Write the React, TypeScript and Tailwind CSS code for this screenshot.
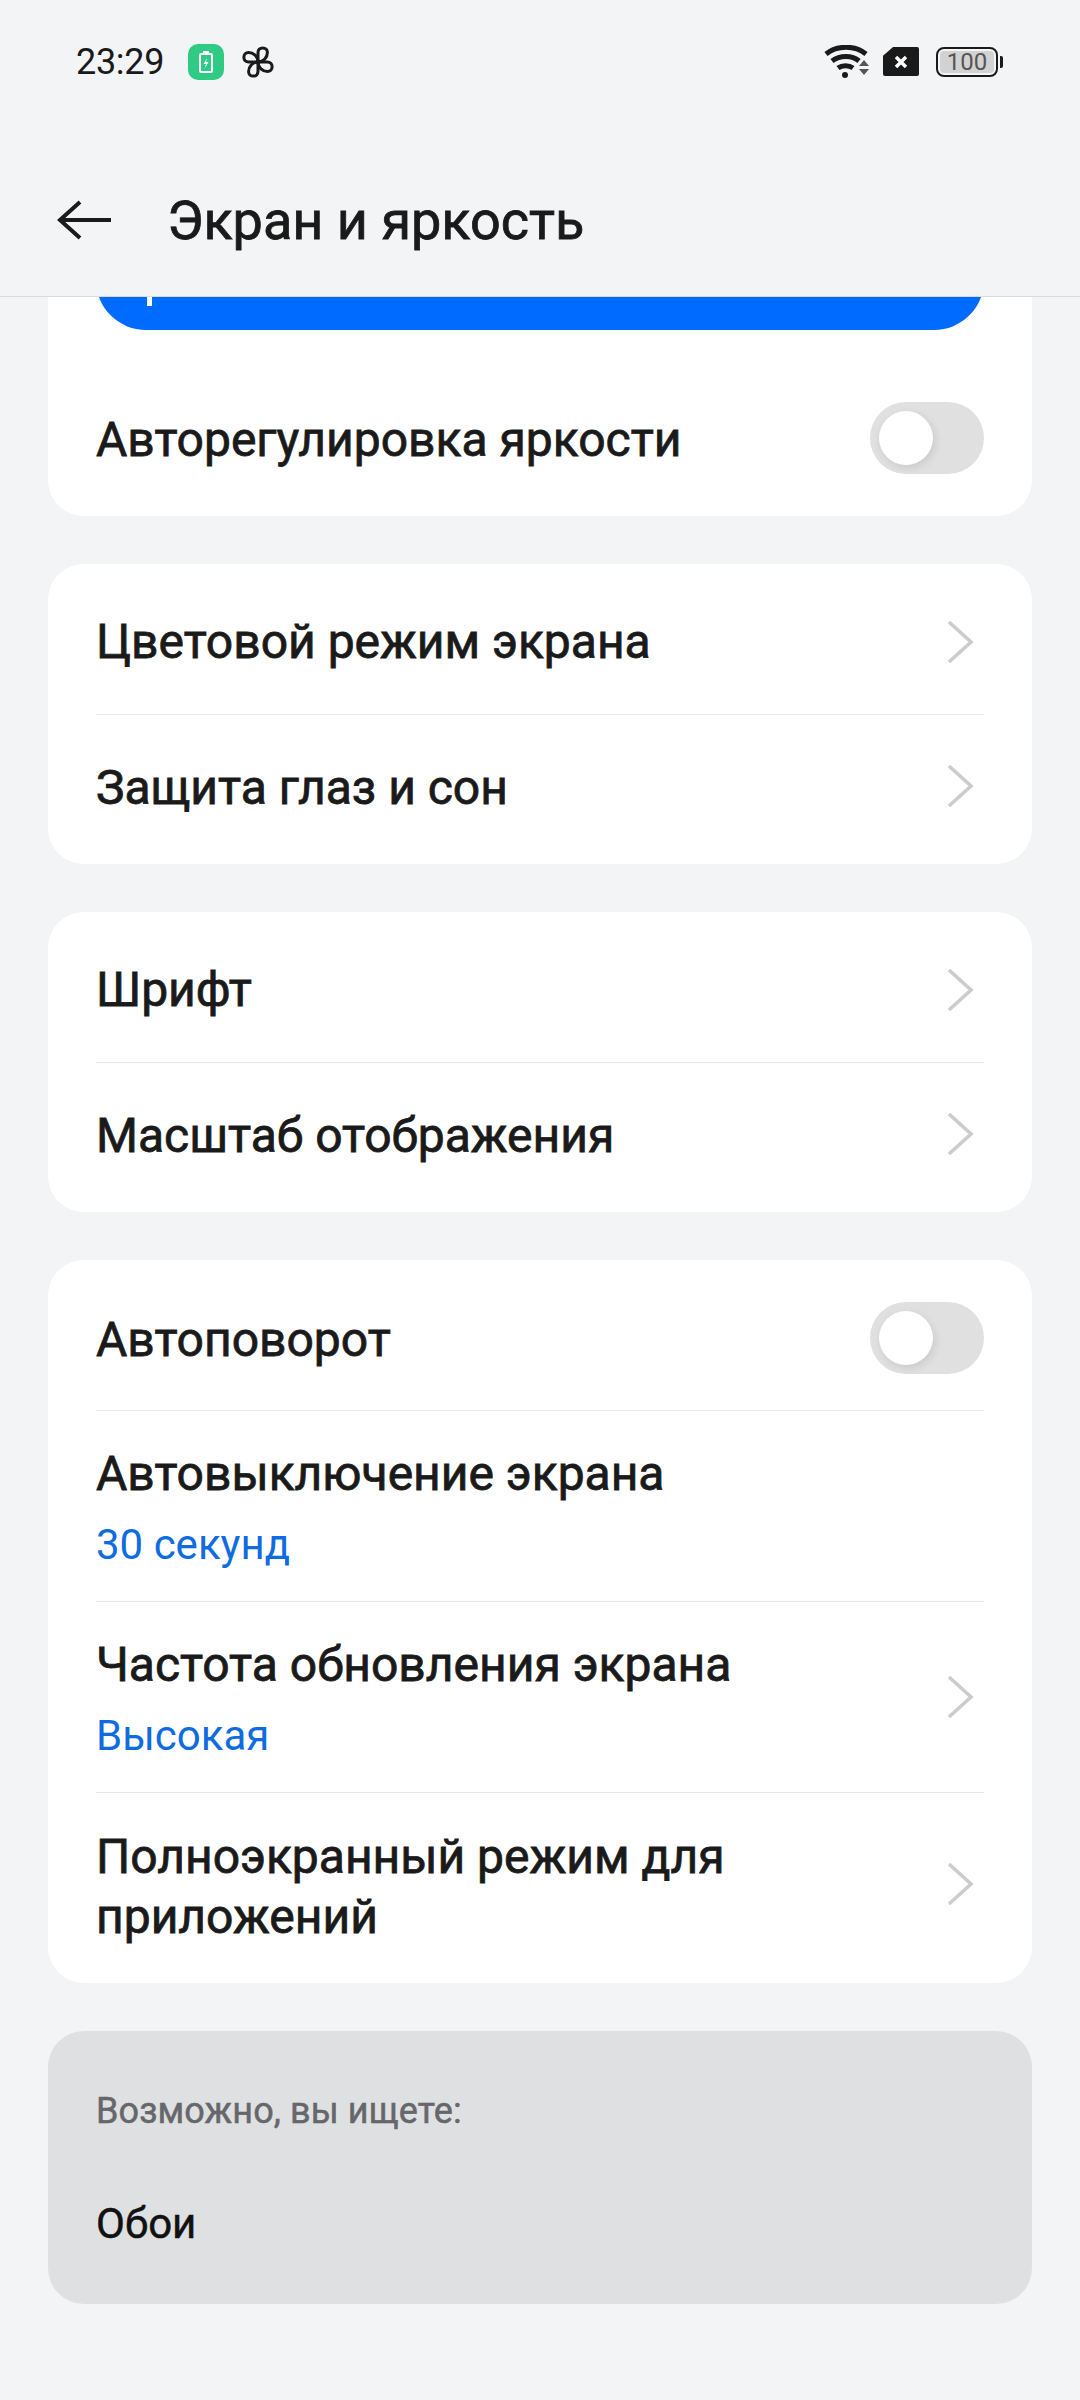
import { ReactNode } from "react";

function Chevron({ className = "" }: { className?: string }) {
  return (
    <svg width="30" height="46" viewBox="0 0 30 46" fill="none" className={`shrink-0 mr-[9px] ${className}`}>
      <path d="M4 3l22 20L4 43" stroke="#cccccc" strokeWidth="3.5" />
    </svg>
  );
}

function Toggle() {
  return (
    <div className="w-[114px] h-[72px] rounded-full bg-[#e0e0e0] flex items-center pl-[9px] shrink-0">
      <div className="w-[54px] h-[54px] rounded-full bg-white shadow-[2px_3px_8px_rgba(0,0,0,0.1)]" />
    </div>
  );
}

function Row({ title, sub, right, divider, className, textClass }: { title: string; sub?: string; right?: ReactNode; divider?: boolean; className: string; textClass?: string }) {
  return (
    <div className={`flex items-center justify-between ${divider ? "border-b border-[#e8e8e8]" : ""} ${className}`}>
      <div className={textClass}>
        <div className="text-[48px] leading-[60px] [-webkit-text-stroke:0.8px] text-[#1a1a1a] w-[700px]">{title}</div>
        {sub && <div className="text-[42px] leading-[56px] mt-[13px] text-[#0f6ce0]">{sub}</div>}
      </div>
      {right}
    </div>
  );
}

export default function App() {
  return (
    <div className="w-[1080px] h-[2400px] bg-[#f2f4f6] overflow-hidden font-['Roboto',sans-serif]">
      <div className="h-[120px] pl-[76px] pr-[77px] pt-[3px] flex items-center justify-between">
        <div className="flex items-center">
          <span className="text-[36px] text-[#1a1a1a] w-[112px] tracking-[-0.3px]">23:29</span>
          <div className="w-[36px] h-[36px] rounded-[10px] bg-[#2fcb85] flex items-center justify-center">
            <svg width="16" height="24" viewBox="0 0 16 24" fill="none">
              <rect x="2" y="4" width="12" height="18" rx="1" stroke="white" strokeWidth="2" />
              <rect x="5" y="1" width="6" height="3" fill="white" />
              <path d="M9 8l-3.5 6H8l-1 4 3.5-6H8z" fill="white" />
            </svg>
          </div>
          <svg className="ml-[18px]" width="32" height="32" viewBox="0 0 34 34" fill="none" stroke="#1a1a1a" strokeWidth="3.2" strokeLinejoin="round">
            <path d="M17 17V7c0-3 2-5 5-5s5 2 5 5c0 5-4 10-10 10z" />
            <path d="M17 17h10c3 0 5 2 5 5s-2 5-5 5c-5 0-10-4-10-10z" />
            <path d="M17 17v10c0 3-2 5-5 5s-5-2-5-5c0-5 4-10 10-10z" />
            <path d="M17 17H7c-3 0-5-2-5-5s2-5 5-5c5 0 10 4 10 10z" />
          </svg>
        </div>
        <div className="flex items-center">
          <svg width="46" height="34" viewBox="0 0 46 34" fill="none">
            <path d="M2 9c11-9 29-9 40 0" stroke="#1a1a1a" strokeWidth="5" />
            <path d="M8 16c8-6 20-6 27 0" stroke="#1a1a1a" strokeWidth="5" />
            <path d="M14 23c4-3 11-3 15 0" stroke="#1a1a1a" strokeWidth="5" />
            <circle cx="21" cy="30" r="3" fill="#1a1a1a" />
            <path d="M35 21l5-6 5 6zM35 24l5 6 5-6z" fill="#555555" />
          </svg>
          <div className="ml-[13px] w-[36px] h-[29px] bg-[#1a1a1a] rounded-[2px] [clip-path:polygon(28%_0,100%_0,100%_100%,0_100%,0_30%)] flex items-center justify-center">
            <svg width="14" height="14" viewBox="0 0 14 14"><path d="M2 2l10 10M12 2L2 12" stroke="white" strokeWidth="3.5" /></svg>
          </div>
          <div className="ml-[17px] w-[62px] h-[30px] rounded-[8px] border-[2px] border-[#1a1a1a] p-[2px]">
            <div className="h-full rounded-[4px] bg-[#d2d2d2] flex items-center justify-center text-[24px] leading-none text-[#555555]">100</div>
          </div>
          <div className="ml-[2px] w-[3px] h-[12px] bg-[#1a1a1a] rounded-r-[2px]" />
        </div>
      </div>

      <div className="h-[177px] border-b border-[#d8dadc] pl-[57px] flex items-center pt-[24px]">
        <svg width="54" height="40" viewBox="0 0 54 40" fill="none" stroke="#1a1a1a" strokeWidth="4">
          <path d="M54 20H3M23 2L3 20l20 18" />
        </svg>
        <span className="ml-[56px] text-[54px] [-webkit-text-stroke:0.8px] text-[#1a1a1a]">Экран и яркость</span>
      </div>

      <div className="px-[48px] flex flex-col gap-[48px]">
        <div className="bg-white rounded-b-[36px] px-[48px]">
          <div className="h-[33px] overflow-hidden">
            <div className="h-[100px] -mt-[67px] rounded-[50px] bg-[#006bff] flex items-end pl-[51px]">
              <div className="w-[5px] h-[9px] mb-[24px] bg-white" />
            </div>
          </div>
          <Row title="Авторегулировка яркости" right={<Toggle />} className="h-[186px] pt-[30px]" textClass="pt-[4px]" />
        </div>

        <div className="bg-white rounded-[36px] px-[48px]">
          <Row title="Цветовой режим экрана" right={<Chevron />} divider className="h-[151px] pt-[6px]" />
          <Row title="Защита глаз и сон" right={<Chevron className="mb-[3px]" />} className="h-[149px] pb-[4px]" />
        </div>

        <div className="bg-white rounded-[36px] px-[48px]">
          <Row title="Шрифт" right={<Chevron />} divider className="h-[151px] pt-[6px]" />
          <Row title="Масштаб отображения" right={<Chevron className="mb-[3px]" />} className="h-[149px] pb-[4px]" />
        </div>

        <div className="bg-white rounded-[36px] px-[48px]">
          <Row title="Автоповорот" right={<Toggle />} divider className="h-[151px] pt-[6px]" textClass="pt-[3px]" />
          <Row title="Автовыключение экрана" sub="30 секунд" divider className="h-[191px]" textClass="pt-[5px]" />
          <Row title="Частота обновления экрана" sub="Высокая" right={<Chevron />} divider className="h-[191px]" textClass="pt-[5px]" />
          <Row title="Полноэкранный режим для приложений" right={<Chevron className="mb-[6px]" />} className="h-[190px] pb-[2px]" />
        </div>

        <div className="bg-[#dfe0e2] rounded-[36px] px-[48px] h-[273px] pt-[56px]">
          <div className="text-[36px] leading-[48px] tracking-[0.1px] [-webkit-text-stroke:0.5px] text-[#66676a]">Возможно, вы ищете:</div>
          <div className="mt-[64px] text-[42px] leading-[50px] [-webkit-text-stroke:0.5px] text-[#111111]">Обои</div>
        </div>
      </div>
    </div>
  );
}
